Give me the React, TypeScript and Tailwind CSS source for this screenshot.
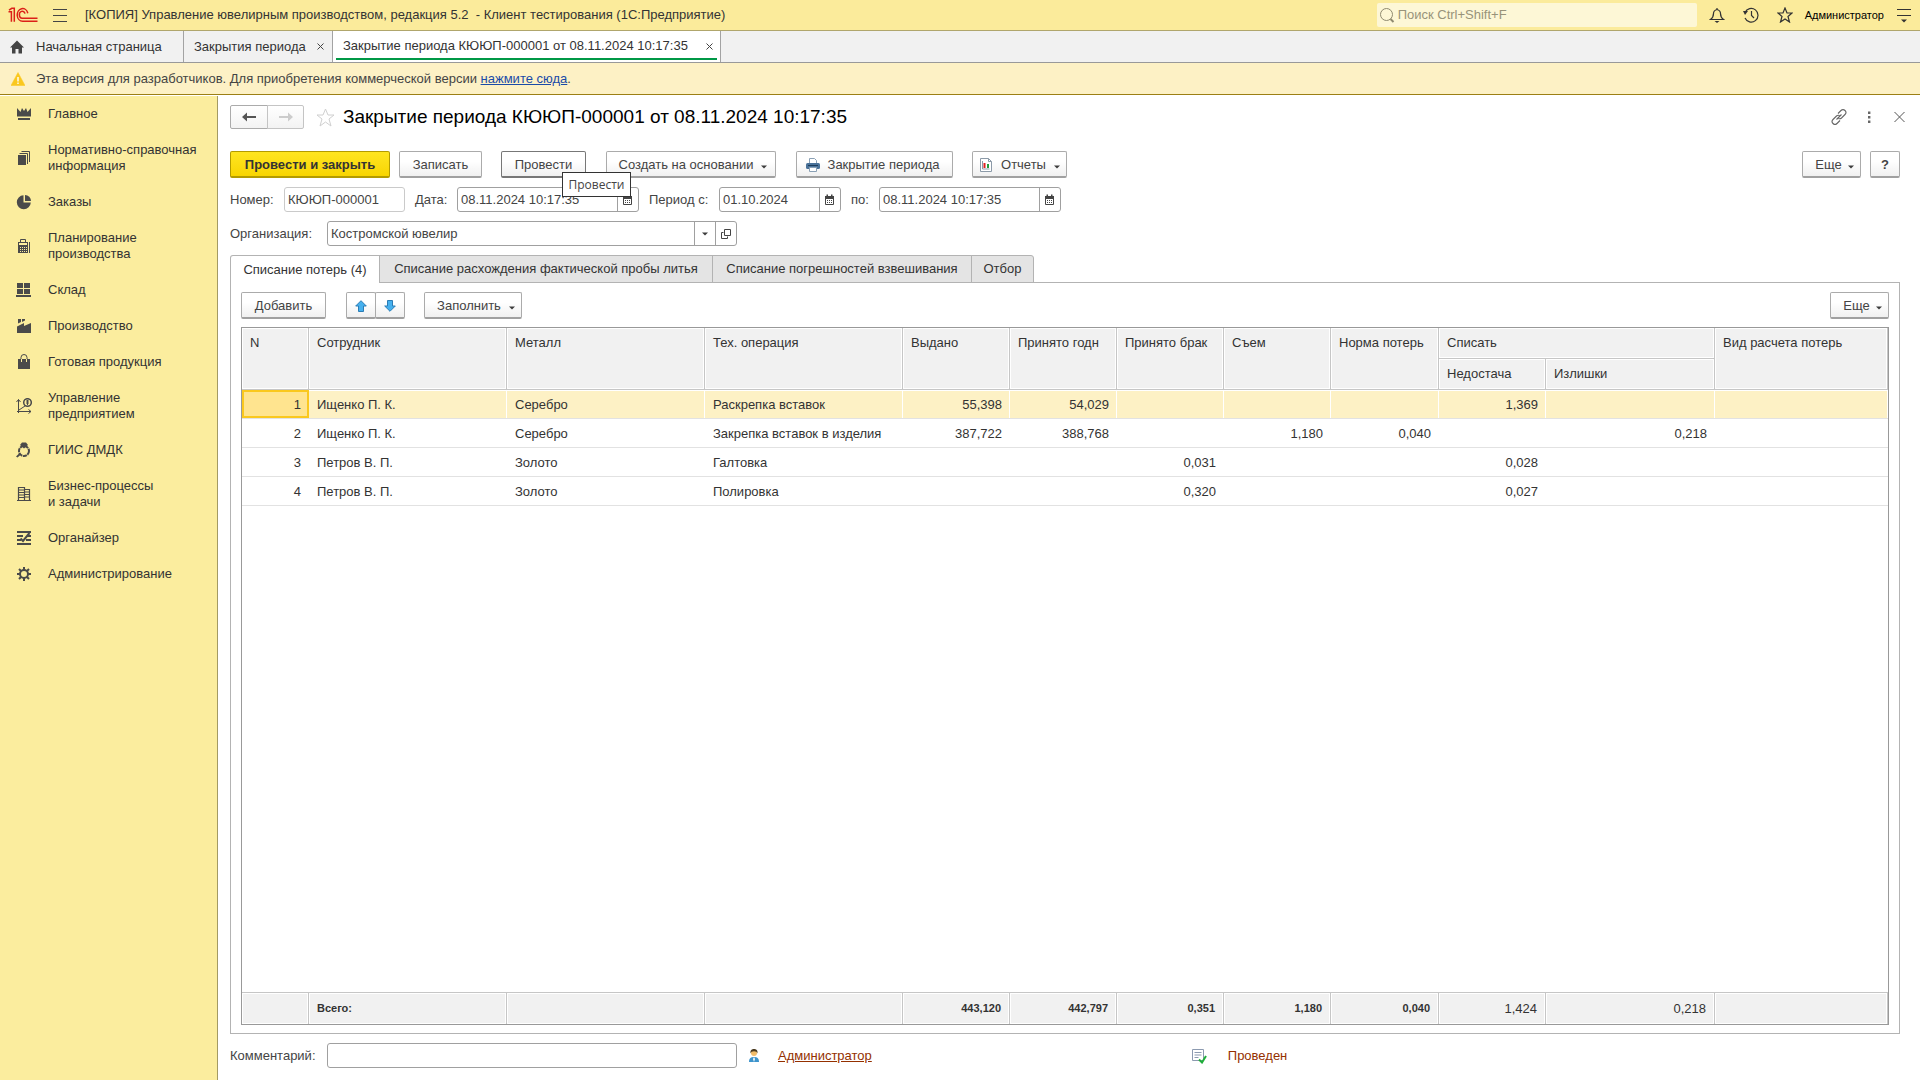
import type { ReactNode } from "react";

/* ---------- icons ---------- */

const Svg = ({ s = 16, vb = "0 0 16 16", c = "", children }: { s?: number; vb?: string; c?: string; children: ReactNode }) => (
  <svg width={s} height={s} viewBox={vb} className={"shrink-0 " + c} fill="none" aria-hidden="true">
    {children}
  </svg>
);

const Logo = () => (
  <svg width="30" height="16" viewBox="0 0 30 16" fill="none" stroke="#dc2018" strokeWidth="1.500" aria-hidden="true" className="shrink-0">
    <path d="M0.500 4.800H3.400V14.800M1 3.200L3.800 1.300H6.300V14.800" />
    <path d="M19.800 6.200A5.400 6.300 0 1 0 14.600 14.200H29.500" />
    <path d="M17 6.600A2.900 3.500 0 1 0 14.600 11.200H29.500" />
  </svg>
);

const Caret = ({ c = "" }: { c?: string }) => (
  <svg width="6" height="4" viewBox="0 0 6 4" className={"shrink-0 " + c} aria-hidden="true">
    <path d="M0 0.5H6L3 3.500Z" fill="#3c3c3c" />
  </svg>
);

const Calendar = () => (
  <Svg s={12} vb="0 0 12 12">
    <path d="M1.500 2.500h8v8h-8z" stroke="#444" />
    <path d="M1 2h9v3H1zM2.500 .5h1.500V2H2.500zM7 .5h1.500V2H7z" fill="#444" />
    <path d="M3 6h1v1H3zM5 6h1v1H5zM7 6h1v1H7zM3 8h1v1H3zM5 8h1v1H5zM7 8h1v1H7z" fill="#444" />
  </Svg>
);

const CloseSmall = () => (
  <Svg s={7} vb="0 0 7 7">
    <path d="M.5 .5l6 6M6.500 .5l-6 6" stroke="#444" />
  </Svg>
);

const F = "#4a4a4a";
const icons: Record<string, ReactNode> = {
  main: <Svg><path d="M1 2l3.500 4L6 2l2 3 2-3 1.500 4L15 2v8.500H1zM2 12h12v2H2z" fill={F} /></Svg>,
  ref: <Svg><path d="M2 5h8v10H2z" fill={F} /><path d="M3.500 3.500h8V14M5.500 1.500h8V12" stroke={F} /></Svg>,
  orders: <Svg><path d="M7.500 1.200V8.500H14.800A7 7 0 1 1 7.500 1.200z" fill={F} /><path d="M9 1a6 6 0 0 1 6 6H9z" fill={F} /></Svg>,
  plan: (
    <Svg>
      <path d="M4.500 5V1.500h5V5" stroke={F} />
      <path fillRule="evenodd" d="M2 4h10v11H2zM3 5h8v2H3zM4 9h1v1H4zM6 9h1v1H6zM8 9h1v1H8zM10 9h1v1h-1zM4 11h1v1H4zM6 11h1v1H6zM8 11h1v1H8zM10 11h1v1h-1zM4 13h1v1H4zM6 13h1v1H6zM8 13h1v1H8zM10 13h1v1h-1zM13 4h1v11h-1z" fill={F} />
    </Svg>
  ),
  stock: <Svg><path d="M1 1h6v5H1zM8 1h6v5H8zM1 7h6v5H1zM8 7h6v5H8zM0 13h15v2H0z" fill={F} /></Svg>,
  prod: <Svg><path d="M2 1h3v3l-3 1.500zM6 1h3v1.500L6 4zM1 15V8.500l7-3.500v3L15 5v10z" fill={F} /></Svg>,
  goods: (
    <Svg>
      <path d="M2 5h12v10H2z" fill={F} />
      <path d="M5.500 8V3.500a2.500 2.500 0 0 1 5 0V8" stroke="#fbed9e" />
      <path d="M5 5V3.500a3 3 0 0 1 6 0V5" stroke={F} />
    </Svg>
  ),
  manage: (
    <Svg>
      <path d="M2.500 1.500V15M1 13.500h14M.5 4l2-2.500 2 2.500M12.500 11.500l2.500 2-2.500 2M3 12l6-4" stroke={F} />
      <circle cx="11.500" cy="4.500" r="3.800" stroke={F} strokeWidth="1.500" />
      <path d="M10 3h3M10 5h3M11.500 2v5" stroke={F} />
    </Svg>
  ),
  giis: (
    <Svg>
      <circle cx="8" cy="9" r="5" stroke={F} strokeWidth="2" strokeDasharray="4 0.700" />
      <path d="M4 3L6 .5h4L12 3 8 6.500zM0 14.500L3.500 11 5 12.500l-3.500 3z" fill={F} />
    </Svg>
  ),
  bp: (
    <Svg>
      <path d="M2.500 1.500h6v13h-6zM8.500 3.500h5v11h-5M1 14.500h14M3 4h5M3 6.500h5M3 9h5M3 11.500h5M9 6h5M9 8.500h5M9 11h5" stroke={F} strokeWidth="1.200" />
    </Svg>
  ),
  org: (
    <Svg>
      <path d="M1 2h14M1 6h6M11 6h4M1 10h4M10 10h5M1 14h14" stroke={F} strokeWidth="2" />
      <path d="M4.500 8.500L7 11l6.500-8" stroke={F} strokeWidth="2" />
    </Svg>
  ),
  admin: (
    <Svg>
      <circle cx="8" cy="8" r="4" stroke={F} strokeWidth="2" />
      <path d="M8 1v3M8 12v3M1 8h3M12 8h3M3 3l2 2M11 11l2 2M13 3l-2 2M5 11l-2 2" stroke={F} strokeWidth="2" />
    </Svg>
  ),
};

const nav: [string, string][] = [
  ["main", "Главное"],
  ["ref", "Нормативно-справочная информация"],
  ["orders", "Заказы"],
  ["plan", "Планирование\nпроизводства"],
  ["stock", "Склад"],
  ["prod", "Производство"],
  ["goods", "Готовая продукция"],
  ["manage", "Управление\nпредприятием"],
  ["giis", "ГИИС ДМДК"],
  ["bp", "Бизнес-процессы\nи задачи"],
  ["org", "Органайзер"],
  ["admin", "Администрирование"],
];

/* ---------- controls ---------- */

const btnBase =
  "flex h-[27px] items-center justify-center rounded-[2px] border border-[#ababab] border-b-2 border-b-[#a0a0a0] bg-linear-to-b from-white from-40% to-[#f0f0f0] pt-px text-[#444] whitespace-nowrap ";

const Btn = ({ c = "", children, label }: { c?: string; children: ReactNode; label?: string }) => (
  <button type="button" aria-label={label} className={btnBase + c}>
    {children}
  </button>
);

const boxBase = "flex h-[25px] overflow-hidden rounded-[3px] border border-[#a0a0a0] bg-white ";
const inputBase = "h-full w-full min-w-0 bg-transparent px-[3px] text-[#444] outline-none";

const DateField = ({ id, label, value, c, lw }: { id: string; label: string; value: string; c: string; lw: string }) => (
  <div className="flex items-center">
    <label htmlFor={id} className={lw}>{label}</label>
    <div className={boxBase + c}>
      <input id={id} defaultValue={value} className={inputBase} />
      <button type="button" aria-label="Выбрать дату" className="flex w-[21px] shrink-0 items-center justify-center border-l border-[#a0a0a0]">
        <Calendar />
      </button>
    </div>
  </div>
);

/* ---------- table ---------- */

const cols = [
  "w-[67px]", "w-[198px]", "w-[198px]", "w-[198px]", "w-[107px]", "w-[107px]", "w-[107px]", "w-[107px]", "w-[108px]", "w-[107px]", "w-[169px]", "w-auto",
];

const rows: string[][] = [
  ["1", "Ищенко П. К.", "Серебро", "Раскрепка вставок", "55,398", "54,029", "", "", "", "1,369", "", ""],
  ["2", "Ищенко П. К.", "Серебро", "Закрепка вставок в изделия", "387,722", "388,768", "", "1,180", "0,040", "", "0,218", ""],
  ["3", "Петров В. П.", "Золото", "Галтовка", "", "", "0,031", "", "", "0,028", "", ""],
  ["4", "Петров В. П.", "Золото", "Полировка", "", "", "0,320", "", "", "0,027", "", ""],
];
const totals = ["", "Всего:", "", "", "443,120", "442,797", "0,351", "1,180", "0,040", "1,424", "0,218", ""];
const isNum = (i: number) => i === 0 || (i >= 4 && i <= 10);

const th =
  "border-r border-b border-[#c6c6c6] bg-[#f1f1f1] px-2 pt-[7px] text-left align-top font-normal whitespace-nowrap overflow-hidden shadow-[inset_0_0_0_1px_#fff] ";

const Table = () => (
  <table className="w-full table-fixed border-separate border-spacing-0 text-[#333]">
    <colgroup>
      {cols.map((w, i) => (
        <col key={i} className={w} />
      ))}
    </colgroup>
    <thead>
      <tr className="h-[31px]">
        {["N", "Сотрудник", "Металл", "Тех. операция", "Выдано", "Принято годн", "Принято брак", "Съем", "Норма потерь"].map((h) => (
          <th key={h} rowSpan={2} scope="col" className={th}>{h}</th>
        ))}
        <th colSpan={2} scope="colgroup" className={th}>Списать</th>
        <th rowSpan={2} scope="col" className={th}>Вид расчета потерь</th>
      </tr>
      <tr className="h-[31px]">
        <th scope="col" className={th}>Недостача</th>
        <th scope="col" className={th}>Излишки</th>
      </tr>
    </thead>
    <tbody>
      {rows.map((r, ri) => (
        <tr key={r[0]} className="h-[29px]">
          {r.map((v, i) => (
            <td
              key={i}
              className={
                "border-b border-[#e2e2e2] whitespace-nowrap overflow-hidden px-2 pt-[2px] " +
                (isNum(i) ? "text-right " : "") +
                (ri === 0
                  ? i === 0
                    ? "bg-[#ffe48f] shadow-[inset_0_0_0_2px_#fac81e]"
                    : "bg-[#fdf1c5] shadow-[inset_-1px_1px_0_#fff]"
                  : "")
              }
            >
              {v}
            </td>
          ))}
        </tr>
      ))}
      <tr>
        <td colSpan={12} />
      </tr>
    </tbody>
    <tfoot>
      <tr className="h-[32px]">
        {totals.map((v, i) => (
          <td
            key={i}
            className={
              "border-t border-r border-[#c6c6c6] bg-[#f1f1f1] px-2 shadow-[inset_0_0_0_1px_#fff] " +
              (isNum(i) ? "text-right " : "") +
              (i < 9 ? "pb-[2px] text-[11px] font-bold" : "")
            }
          >
            {v}
          </td>
        ))}
      </tr>
    </tfoot>
  </table>
);

/* ---------- page ---------- */

export default function App() {
  return (
    <div className="flex min-h-screen flex-col bg-white font-['Liberation_Sans',Arial,sans-serif] text-[13px] leading-4 text-[#444]">
      <header className="flex h-[31px] items-center border-b border-[#b0a66c] bg-[#fbeb9b] pr-2 pl-2 text-[#333]">
        <Logo />
        <button type="button" aria-label="Меню" className="ml-[14px]">
          <Svg s={16}><path d="M1 2.500h14M1 8.500h14M1 14.500h14" stroke="#444" /></Svg>
        </button>
        <h1 className="ml-[17px] whitespace-pre">[КОПИЯ] Управление ювелирным производством, редакция 5.2  - Клиент тестирования (1С:Предприятие)</h1>
        <label className="ml-auto flex h-6 w-[320px] items-center gap-[3px] rounded-[2px] bg-[#fdf7d6] px-[2px]">
          <Svg s={16}><circle cx="7.500" cy="7.500" r="6" stroke="#8f8a70" /><path d="M11.500 12l3 3" stroke="#8f8a70" strokeWidth="2" /></Svg>
          <input aria-label="Поиск" placeholder="Поиск Ctrl+Shift+F" className="w-full bg-transparent outline-none placeholder:text-[#98937a]" />
        </label>
        <button type="button" aria-label="Уведомления" className="ml-3">
          <Svg><path d="M1.500 12.500c2-1.500 3-3 3-6C4.500 4 6 3 8 2.500c2 .5 3.500 1.500 3.500 4 0 3 1 4.500 3 6zM8 1v1.500" stroke="#333" strokeWidth="1.200" /><path d="M5.500 14h5L8 16z" fill="#333" /></Svg>
        </button>
        <button type="button" aria-label="История" className="ml-[18px]">
          <Svg><path d="M2 5.500A6.800 6.800 0 1 1 2 11M8.500 4v4.500l2.500 2.500" stroke="#333" strokeWidth="1.200" /><path d="M0 4h5L2 8z" fill="#333" /></Svg>
        </button>
        <button type="button" aria-label="Избранное" className="ml-[18px]">
          <Svg><path d="M8 1l2 5h5l-4 3.500 1.500 5.500L8 12l-4.500 3L5 9.500 1 6h5z" stroke="#333" strokeWidth="1.200" /></Svg>
        </button>
        <span className="ml-3 text-[11px] text-black">Администратор</span>
        <button type="button" aria-label="Настройки" className="ml-3">
          <Svg><path d="M1 2.500h14M1 8.500h14" stroke="#333" /><path d="M5 12.500h6L8 15.500z" fill="#333" /></Svg>
        </button>
      </header>

      <nav className="flex h-8 border-b border-[#999] bg-[#f1f1f1] text-[#333]" aria-label="Открытые окна">
        <a href="#home" className="flex w-[184px] items-center gap-3 border-r border-[#a3a3a3] pl-[10px]">
          <Svg s={14} vb="0 0 14 14"><path d="M7 0.500l7 7h-2v6H8.500V9h-3v4.500H2v-6H0z" fill="#444" /></Svg>
          Начальная страница
        </a>
        <div className="flex w-[149px] items-center justify-between border-r border-[#a3a3a3] pr-2 pl-[10px]">
          <a href="#list">Закрытия периода</a>
          <button type="button" aria-label="Закрыть"><CloseSmall /></button>
        </div>
        <div className="flex w-[388px] border-r border-[#a3a3a3] bg-white px-[3px] pb-[2px]">
          <div className="flex w-full items-center justify-between border-b-2 border-[#009846] pt-[3px] pr-1 pl-[7px]">
            <a href="#doc">Закрытие периода КЮЮП-000001 от 08.11.2024 10:17:35</a>
            <button type="button" aria-label="Закрыть"><CloseSmall /></button>
          </div>
        </div>
      </nav>

      <div className="flex h-8 items-center border-b border-[#9c7f14] bg-[#fdf1c5] pl-[11px]">
        <Svg s={14} vb="0 0 14 14"><path d="M7 0.500L14 13.500H0z" fill="#fac81e" stroke="#fac81e" strokeLinejoin="round" strokeWidth="0.500" /><path d="M6.300 5h1.400v4.500H6.300zM6.300 10.500h1.400V12H6.300z" fill="#fff" /></Svg>
        <p className="ml-[11px]">
          Эта версия для разработчиков. Для приобретения коммерческой версии <a href="#buy" className="text-[#1a4ba8] underline">нажмите сюда</a>.
        </p>
      </div>

      <div className="flex flex-1 pt-px">
        <aside className="w-[218px] shrink-0 border-r border-[#a39a63] bg-[#fbed9e] text-[#333]">
          <ul>
            {nav.map(([k, t]) => (
              <li key={k}>
                <a href={"#" + k} className="flex items-center gap-4 py-[10px] pl-4 whitespace-pre-line">
                  {icons[k]}
                  {t}
                </a>
              </li>
            ))}
          </ul>
        </aside>

        <main className="flex min-w-0 flex-1 flex-col pt-[9px] pr-5 pb-3 pl-3">
          <div className="flex h-6 items-center">
            <div className="flex">
              <button type="button" aria-label="Назад" className="flex h-6 w-[38px] items-center justify-center rounded-l-[2px] border border-[#ababab] bg-linear-to-b from-white to-[#f3f3f3]">
                <Svg s={14} vb="0 0 14 10"><path d="M0 5l5-4.500V4h9v2H5v3.500z" fill="#555" /></Svg>
              </button>
              <button type="button" aria-label="Вперед" className="-ml-px flex h-6 w-[37px] items-center justify-center rounded-r-[2px] border border-[#c4c4c4] bg-linear-to-b from-white to-[#f3f3f3]">
                <Svg s={14} vb="0 0 14 10"><path d="M14 5L9 .5V4H0v2h9v3.500z" fill="#ccc" /></Svg>
              </button>
            </div>
            <button type="button" aria-label="В избранное" className="ml-3">
              <Svg s={19} vb="0 0 19 19"><path d="M9.500 1l2.500 6h6l-5 4 2 7-5.500-4L4 18l2-7-5-4h6z" stroke="#d0d0d0" /></Svg>
            </button>
            <h2 className="ml-2 text-[19px] leading-6 text-black">Закрытие периода КЮЮП-000001 от 08.11.2024 10:17:35</h2>
            <div className="-mr-[7px] ml-auto flex items-center gap-[14px]">
              <button type="button" aria-label="Ссылка">
                <Svg><path d="M7 4.500l3-3a2.800 2.800 0 0 1 4 4l-3.500 3.500a2.800 2.800 0 0 1-3 .5M9 11.500l-3 3a2.800 2.800 0 0 1-4-4L5.500 7a2.800 2.800 0 0 1 3-.5M5.500 10.500l5-5" stroke="#666" strokeWidth="1.100" /></Svg>
              </button>
              <button type="button" aria-label="Еще"><Svg><path d="M7 2.500h2.400v2.400H7zM7 7h2.400v2.400H7zM7 11.500h2.400v2.400H7z" fill="#666" /></Svg></button>
              <button type="button" aria-label="Закрыть форму"><Svg><path d="M3.500 3l10 10M13.500 3l-10 10" stroke="#555" /></Svg></button>
            </div>
          </div>

          <div className="mt-[22px] flex items-center">
            <button type="button" className="flex h-[27px] w-[160px] items-center justify-center rounded-[2px] border border-b-2 border-[#b39b00] bg-linear-to-b from-[#ffe51f] to-[#f8d500] pt-px font-bold whitespace-nowrap text-[#333]">
              Провести и закрыть
            </button>
            <Btn c="ml-[9px] w-[83px]">Записать</Btn>
            <div className="relative ml-[19px]">
              <button type="button" aria-describedby="tip" className="flex h-[27px] w-[85px] items-center justify-center rounded-[2px] border border-b-2 border-[#777] bg-linear-to-b from-white from-40% to-[#f0f0f0] pt-px text-[#444]">
                Провести
              </button>
              <div id="tip" role="tooltip" className="absolute top-[21px] left-[61px] z-10 flex h-[25px] w-[69px] items-center justify-center border border-[#333] bg-white font-['Open_Sans',sans-serif] text-[12px]">
                Провести
              </div>
            </div>
            <Btn c="ml-5 w-[170px] gap-2 pl-1">Создать на основании <Caret c="mt-1" /></Btn>
            <Btn c="ml-5 w-[157px] gap-2 pr-1">
              <Svg s={14} vb="0 0 14 14">
                <path d="M3.500 5V.5h5l2 2V5" fill="#fff" stroke="#8aa0b5" />
                <rect x="0" y="5" width="14" height="6" rx="1.500" fill="#4a7299" />
                <path d="M2 7.500h10" stroke="#1d3d5c" />
                <path d="M3.500 9.500h7v4h-7z" fill="#fff" stroke="#8aa0b5" />
              </Svg>
              Закрытие периода
            </Btn>
            <Btn c="ml-[19px] w-[95px] gap-2">
              <Svg s={14} vb="0 0 14 14">
                <path d="M1.500 .5h8l3 3v10h-11z" fill="#fff" stroke="#8c9aa8" />
                <path d="M9.500 .5v3h3M3.500 3v8h7" stroke="#8c9aa8" />
                <path d="M4.500 5h2v5h-2z" fill="#e02020" />
                <path d="M8 6h2v4H8z" fill="#1f9d3a" />
              </Svg>
              Отчеты <Caret c="mt-1" />
            </Btn>
            <Btn c="ml-auto w-[59px] gap-[6px] pl-[6px]">Еще <Caret c="mt-1" /></Btn>
            <Btn c="ml-[9px] w-[30px] font-bold">?</Btn>
          </div>

          <div className="mt-[9px] flex items-center gap-[10px]">
            <div className="flex items-center">
              <label htmlFor="num" className="w-[54px]">Номер:</label>
              <div className="flex h-[25px] w-[121px] rounded-[3px] border border-[#cacaca]">
                <input id="num" defaultValue="КЮЮП-000001" className={inputBase} />
              </div>
            </div>
            <DateField id="date" label="Дата:" value="08.11.2024 10:17:35" c="w-[182px]" lw="w-[42px]" />
            <DateField id="from" label="Период с:" value="01.10.2024" c="w-[122px]" lw="w-[70px]" />
            <DateField id="to" label="по:" value="08.11.2024 10:17:35" c="w-[182px]" lw="w-[28px]" />
          </div>

          <div className="mt-[9px] flex items-center">
            <label htmlFor="orgn" className="w-[97px]">Организация:</label>
            <div className={boxBase + "w-[410px]"}>
              <input id="orgn" defaultValue="Костромской ювелир" className={inputBase} />
              <button type="button" aria-label="Выбрать" className="flex w-[21px] shrink-0 items-center justify-center border-l border-[#a0a0a0]"><Caret /></button>
              <button type="button" aria-label="Открыть" className="flex w-[21px] shrink-0 items-center justify-center border-l border-[#a0a0a0]">
                <Svg s={10} vb="0 0 10 10"><path d="M3.500 .5h6v6h-6zM2.500 3.500h-2v6h6v-2" stroke="#444" /></Svg>
              </button>
            </div>
          </div>

          <div role="tablist" className="mt-[9px] flex h-7 text-[#333]">
            <button type="button" role="tab" aria-selected="true" className="relative z-10 w-[150px] rounded-tl-[3px] border-t border-r border-l border-[#b3b3b3] bg-white">Списание потерь (4)</button>
            <button type="button" role="tab" aria-selected="false" className="-ml-px w-[334px] border border-[#b3b3b3] bg-[#e4e4e4]">Списание расхождения фактической пробы литья</button>
            <button type="button" role="tab" aria-selected="false" className="-ml-px w-[260px] border border-[#b3b3b3] bg-[#e4e4e4]">Списание погрешностей взвешивания</button>
            <button type="button" role="tab" aria-selected="false" className="-ml-px w-[63px] rounded-tr-[3px] border border-[#b3b3b3] bg-[#e4e4e4]">Отбор</button>
          </div>

          <section className="-mt-px flex flex-1 flex-col border border-[#b3b3b3] px-[10px] pt-[9px] pb-2">
            <div className="flex items-center">
              <Btn c="w-[85px]">Добавить</Btn>
              <div className="ml-5 flex">
                <Btn c="w-[30px]" label="Вверх"><Svg s={12} vb="0 0 12 12"><path d="M6 .7L11.300 6H8.500v5.500h-5V6H.7z" fill="#45b0ee" stroke="#2a7cb5" /></Svg></Btn>
                <Btn c="-ml-px w-[30px]" label="Вниз"><Svg s={12} vb="0 0 12 12"><path d="M6 11.300L.7 6h2.800V.5h5V6h2.800z" fill="#45b0ee" stroke="#2a7cb5" /></Svg></Btn>
              </div>
              <Btn c="ml-[19px] w-[98px] gap-2 pl-[6px]">Заполнить <Caret c="mt-1" /></Btn>
              <Btn c="ml-auto w-[59px] gap-[6px] pl-[6px]">Еще <Caret c="mt-1" /></Btn>
            </div>
            <div className="mt-2 flex flex-1 border border-[#999]">
              <Table />
            </div>
          </section>

          <div className="mt-[9px] flex items-center">
            <label htmlFor="comment" className="w-[97px]">Комментарий:</label>
            <div className={boxBase + "w-[410px]"}>
              <input id="comment" className={inputBase} />
            </div>
            <Svg s={14} vb="0 0 14 14" c="ml-[10px]">
              <path d="M2 13c0-4 2-5 5-5s5 1 5 5z" fill="#3d94cc" />
              <path d="M7 8l1 2-1 3-1-3z" fill="#fff" />
              <circle cx="7" cy="4" r="3" fill="#f2bd6b" />
              <path d="M3.500 4.500C3 1 5 0 7 0S11 1 10.500 4.500C10 3 9 2.300 7 2.300S4 3 3.500 4.500z" fill="#4a3a20" />
            </Svg>
            <a href="#user" className="ml-[17px] text-[#943000] underline">Администратор</a>
            <Svg s={16} c="ml-[319px]">
              <path d="M1.500 1.500h11v11h-11z" fill="#fff" stroke="#8c9ab0" />
              <path d="M3.500 4.500h7M3.500 7h7M3.500 9.500h4" stroke="#8c9ab0" />
              <path d="M8 11.500l3 3L15 8" stroke="#1fae3a" strokeWidth="2" />
            </Svg>
            <span className="ml-[21px] text-[#943000]">Проведен</span>
          </div>
        </main>
      </div>
    </div>
  );
}
